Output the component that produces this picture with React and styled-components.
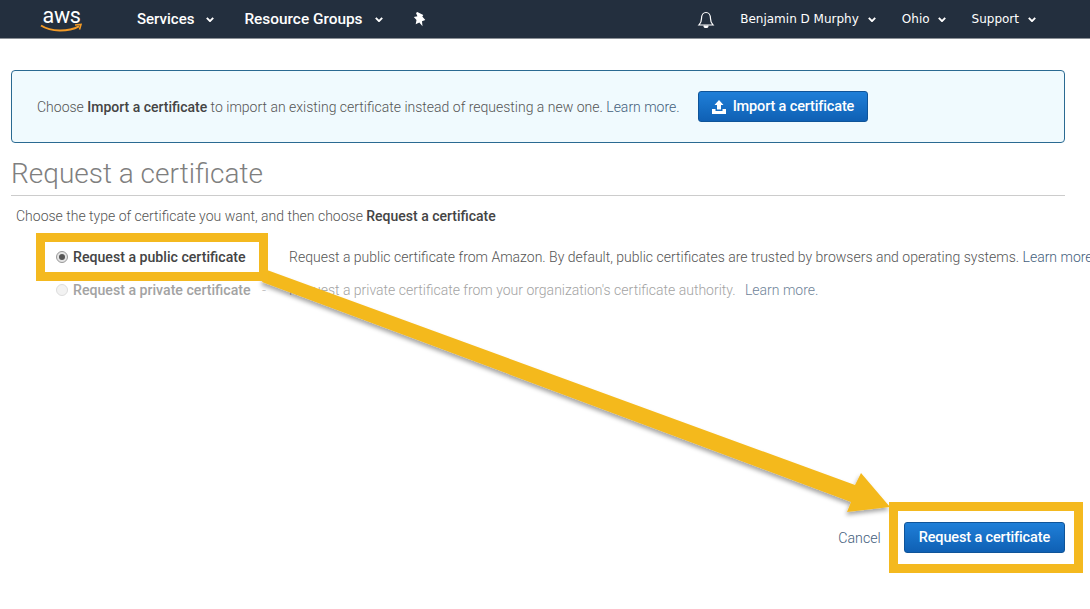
import React from "react";
import styled, { createGlobalStyle } from "styled-components";

const Global = createGlobalStyle`
  html, body { margin: 0; padding: 0; background: #fff; }
  body { width: 1090px; height: 609px; overflow: hidden; font-family: Roboto, "Liberation Sans", sans-serif; }
`;
const Page = styled.div`position: relative; width: 1090px; height: 609px; overflow: hidden;`;
const Nav = styled.header`
  height: 38px; background: #232f3e; border-bottom: 1px solid #8b9096; padding-right: 54px;
  display: flex; align-items: center; color: #fff; box-sizing: content-box;
`;
const LogoSlot = styled.div`width: 137px; padding-left: 40px; box-sizing: border-box; display: flex;`;
const NavItem = styled.div`
  display: flex; align-items: center; gap: ${p => p.$gap || 8}px; font-size: ${p => p.$size || 15}px;
  font-weight: ${p => p.$weight || 400}; margin-left: ${p => p.$ml || 0}px; white-space: nowrap;
  font-family: ${p => p.$alt ? '"DejaVu Sans", sans-serif' : 'Roboto, sans-serif'};
`;
const Spacer = styled.div`flex: 1;`;
const Main = styled.main`padding: 31px 25px 0 11px;`;
const Banner = styled.section`
  height: 73px; box-sizing: border-box; background: #f0fafe; border: 1px solid #2a6a92; border-radius: 4px;
  padding-left: 25px; display: flex; align-items: center; gap: 18px; font-size: 14px; font-weight: 300; color: #555;
`;
const Strong = styled.b`font-weight: 500; color: #444;`;
const LinkText = styled.span`
  color: ${p => p.$dim ? "#6f8499" : "#44607c"};
  margin-left: ${p => p.$ml || 0}px;
`;
const PrimaryButton = styled.button`
  height: 31px; box-sizing: border-box; border: 1px solid #0f5499; border-radius: 3px; padding: 0 ${p => p.$pad || 13}px;
  background: linear-gradient(#1f7fd8, #0f60b4); color: #fff; font: 500 14.5px Roboto, sans-serif;
  display: flex; align-items: center; gap: 6px; white-space: nowrap; letter-spacing: -.15px;
`;
const Title = styled.h1`
  margin: 14px 0 0; height: 38px; line-height: 33px; font-size: 28px; font-weight: 300; color: #7f7f7f;
  border-bottom: 1px solid #ccc;
`;
const Intro = styled.p`margin: 12px 0 0 5px; font-size: 14px; line-height: 17px; font-weight: 300; color: #555; white-space: nowrap;`;
const Options = styled.div`margin: 23px 0 0 45px; display: flex; flex-direction: column; gap: 16px; width: 1100px;`;
const Option = styled.div`
  display: flex; align-items: center; height: 17px; font-size: 14px; white-space: nowrap;
  color: ${p => p.$off ? "#a3a3a3" : "#555"}; font-weight: 300;
`;
const Radio = styled.span`
  width: 12px; height: 12px; border-radius: 50%; box-sizing: border-box; margin-right: 5px; flex: none;
  border: 1px solid ${p => p.$off ? "#ddd" : "#999"}; background: ${p => p.$off ? "#f2f2f2" : "#e4e4e4"};
  display: flex; align-items: center; justify-content: center;
  &::after { content: ""; width: 6px; height: 6px; border-radius: 50%; background: ${p => p.$off ? "transparent" : "#555"}; }
`;
const OptionLabel = styled.span`width: 189px; font-size: 14.15px; font-weight: 500; color: ${p => p.$off ? "#a3a3a3" : "#444"};`;
const Dash = styled.span`width: 27px; color: #bbb;`;
const Footer = styled.div`margin-top: 224px; display: flex; justify-content: flex-end; align-items: center; gap: 23px;`;
const Cancel = styled.span`font-size: 14.2px; font-weight: 300; color: #44607c;`;
const Highlight = styled.div`
  position: absolute; box-sizing: border-box; border: 9px solid #f4b91f;
  left: ${p => p.$x}px; top: ${p => p.$y}px; width: ${p => p.$w}px; height: ${p => p.$h}px;
`;
const ArrowSvg = styled.svg`position: absolute; left: 0; top: 0; pointer-events: none;`;

const Chevron = () => (
  <svg width="8" height="5" viewBox="0 0 10 6"><path d="M1 1l4 4 4-4" fill="none" stroke="#fff" strokeWidth="2.4" /></svg>
);
const Logo = () => (
  <svg width="46" height="32" viewBox="0 0 46 32">
    <text x="2.500" y="20" fontFamily="Roboto, sans-serif" fontSize="21.500" fontWeight="400" fill="#fff" letterSpacing="-.3">aws</text>
    <path d="M1 22.500c10 6.500 27 6.500 38 .8" fill="none" stroke="#f29a26" strokeWidth="2" />
    <path d="M35 22l6-.6-1.500 5" fill="none" stroke="#f29a26" strokeWidth="1.600" />
  </svg>
);
const Pin = () => (
  <svg width="14" height="15" viewBox="0 0 14 15">
    <path d="M3 1l1.300-1 6 3-1 1.500 3 3.500-3.300 1.200 .5 5-3.200-3.800-3.600 1.800 .8-4.200-2.700-3 3.600-.8z" fill="#fff" />
  </svg>
);
const Bell = () => (
  <svg width="18" height="19" viewBox="0 0 18 19" fill="none" stroke="#fff" strokeWidth="1.200">
    <path d="M2 15c1.500-1.500 2.500-3 2.500-6.500C4.500 5 6.500 2.500 9 2.500s4.500 2.500 4.500 6c0 3.500 1 5 2.500 6.500z" />
    <path d="M7 15.500a2 2 0 004 0" fill="#fff" />
  </svg>
);
const Upload = () => (
  <svg width="15" height="14" viewBox="0 0 15 14" fill="#fff">
    <path d="M7 0l4.500 5H9v4.500H5V5H2.500z" />
    <path d="M0 9h3.500v2h7V9H14v5H0z" />
  </svg>
);

export default function App() {
  return (
    <Page>
      <Global />
      <Nav>
        <LogoSlot><Logo /></LogoSlot>
        <NavItem $weight={500} $gap={12}>Services <Chevron /></NavItem>
        <NavItem $weight={500} $size={15.4} $ml={30} $gap={12}>Resource Groups <Chevron /></NavItem>
        <NavItem $ml={30}><Pin /></NavItem>
        <Spacer />
        <NavItem><Bell /></NavItem>
        <NavItem $alt $size={12} $ml={25} $gap={9}>Benjamin D Murphy <Chevron /></NavItem>
        <NavItem $alt $size={12} $ml={26} $gap={8}>Ohio <Chevron /></NavItem>
        <NavItem $alt $size={12} $ml={26} $gap={9}>Support <Chevron /></NavItem>
      </Nav>
      <Main>
        <Banner>
          <span>Choose <Strong>Import a certificate</Strong> to import an existing certificate instead of requesting a new one. <LinkText>Learn more.</LinkText></span>
          <PrimaryButton><Upload />Import a certificate</PrimaryButton>
        </Banner>
        <Title>Request a certificate</Title>
        <Intro>Choose the type of certificate you want, and then choose <Strong>Request a certificate</Strong></Intro>
        <Options>
          <Option>
            <Radio />
            <OptionLabel>Request a public certificate</OptionLabel>
            <Dash>-</Dash>
            <span>Request a public certificate from Amazon. By default, public certificates are trusted by browsers and operating systems. <LinkText>Learn more.</LinkText></span>
          </Option>
          <Option $off>
            <Radio $off />
            <OptionLabel $off>Request a private certificate</OptionLabel>
            <Dash>-</Dash>
            <span>Request a private certificate from your organization's certificate authority. <LinkText $dim $ml={6}>Learn more.</LinkText></span>
          </Option>
        </Options>
        <Footer>
          <Cancel>Cancel</Cancel>
          <PrimaryButton $pad={14}>Request a certificate</PrimaryButton>
        </Footer>
      </Main>
      <ArrowSvg width="1090" height="609" viewBox="0 0 1090 609">
        <defs>
          <filter id="sh" x="-5%" y="-5%" width="110%" height="110%">
            <feDropShadow dx="-1" dy="3" stdDeviation="2" floodColor="#000" floodOpacity=".35" />
          </filter>
        </defs>
        <polygon points="267,270 855,485 861,473 890,507 847,512 851,502 262,282" fill="#f4b91f" filter="url(#sh)" />
      </ArrowSvg>
      <Highlight $x={36} $y={233} $w={232} $h={48} />
      <Highlight $x={889} $y={502} $w={194} $h={71} />
    </Page>
  );
}
